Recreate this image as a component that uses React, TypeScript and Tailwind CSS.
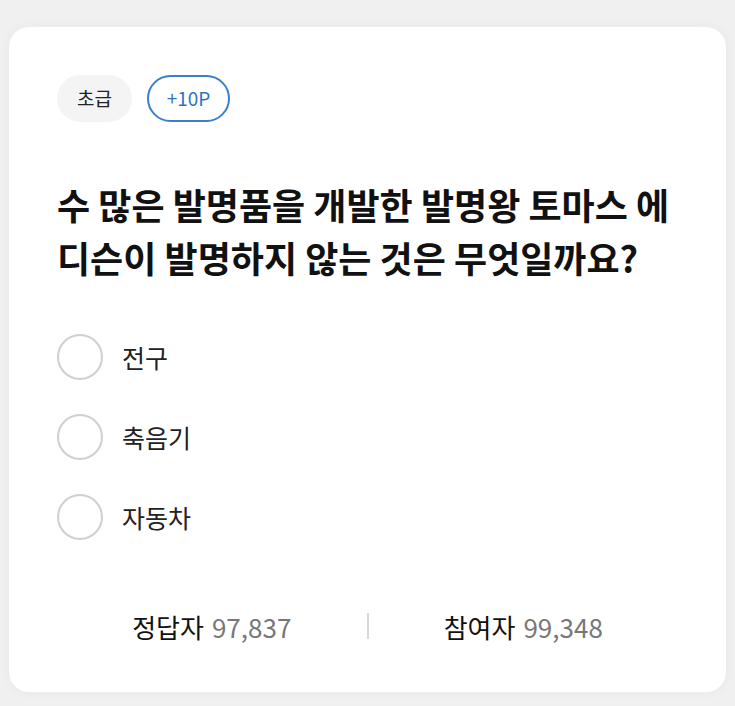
const OPTIONS = ["전구", "축음기", "자동차"];

export default function App() {
  return (
    <div
      className="min-h-[706px] bg-[#f0f0f0] pt-[27px] px-[9px] pb-[14px]"
      style={{ fontFamily: '"Noto Sans CJK KR", "Noto Sans", sans-serif' }}
    >
      <div className="rounded-[20px] bg-white px-[48px] pt-[48px] pb-[48px] shadow-[0_0_12px_rgba(0,0,0,0.04)]">
        {/* Level + point badges */}
        <div className="flex items-center gap-[15px]">
          <span className="flex h-[47px] w-[75px] items-center justify-center rounded-full bg-[#f4f4f4] text-[19px] text-[#222]">
            초급
          </span>
          <span className="flex h-[47px] w-[83px] items-center justify-center rounded-full border-2 border-[#3a7fcb] text-[19px] text-[#2f74c4]">
            +10P
          </span>
        </div>

        {/* Question */}
        <h1 className="mt-[56px] text-[36px] font-bold leading-[53px] text-[#111]">
          수 많은 발명품을 개발한 발명왕 토마스 에
          <br />
          디슨이 발명하지 않는 것은 무엇일까요?
        </h1>

        {/* Choices */}
        <ul className="mt-[50px] flex flex-col gap-[34px]">
          {OPTIONS.map((opt) => (
            <li key={opt} className="flex items-center gap-[19px]">
              <span className="h-[46px] w-[46px] rounded-full border-2 border-[#cfcfcf]" />
              <span className="text-[25px] leading-[46px] text-[#222]">{opt}</span>
            </li>
          ))}
        </ul>

        {/* Stats */}
        <div className="mt-[68px] flex h-[36px] items-center">
          <div className="flex flex-1 items-center justify-center gap-[8px] text-[26px]">
            <span className="text-[#111]">정답자</span>
            <span className="text-[#777]">97,837</span>
          </div>
          <span className="h-[26px] w-[2px] bg-[#d9d9d9]" />
          <div className="flex flex-1 items-center justify-center gap-[8px] text-[26px]">
            <span className="text-[#111]">참여자</span>
            <span className="text-[#777]">99,348</span>
          </div>
        </div>
      </div>
    </div>
  );
}
